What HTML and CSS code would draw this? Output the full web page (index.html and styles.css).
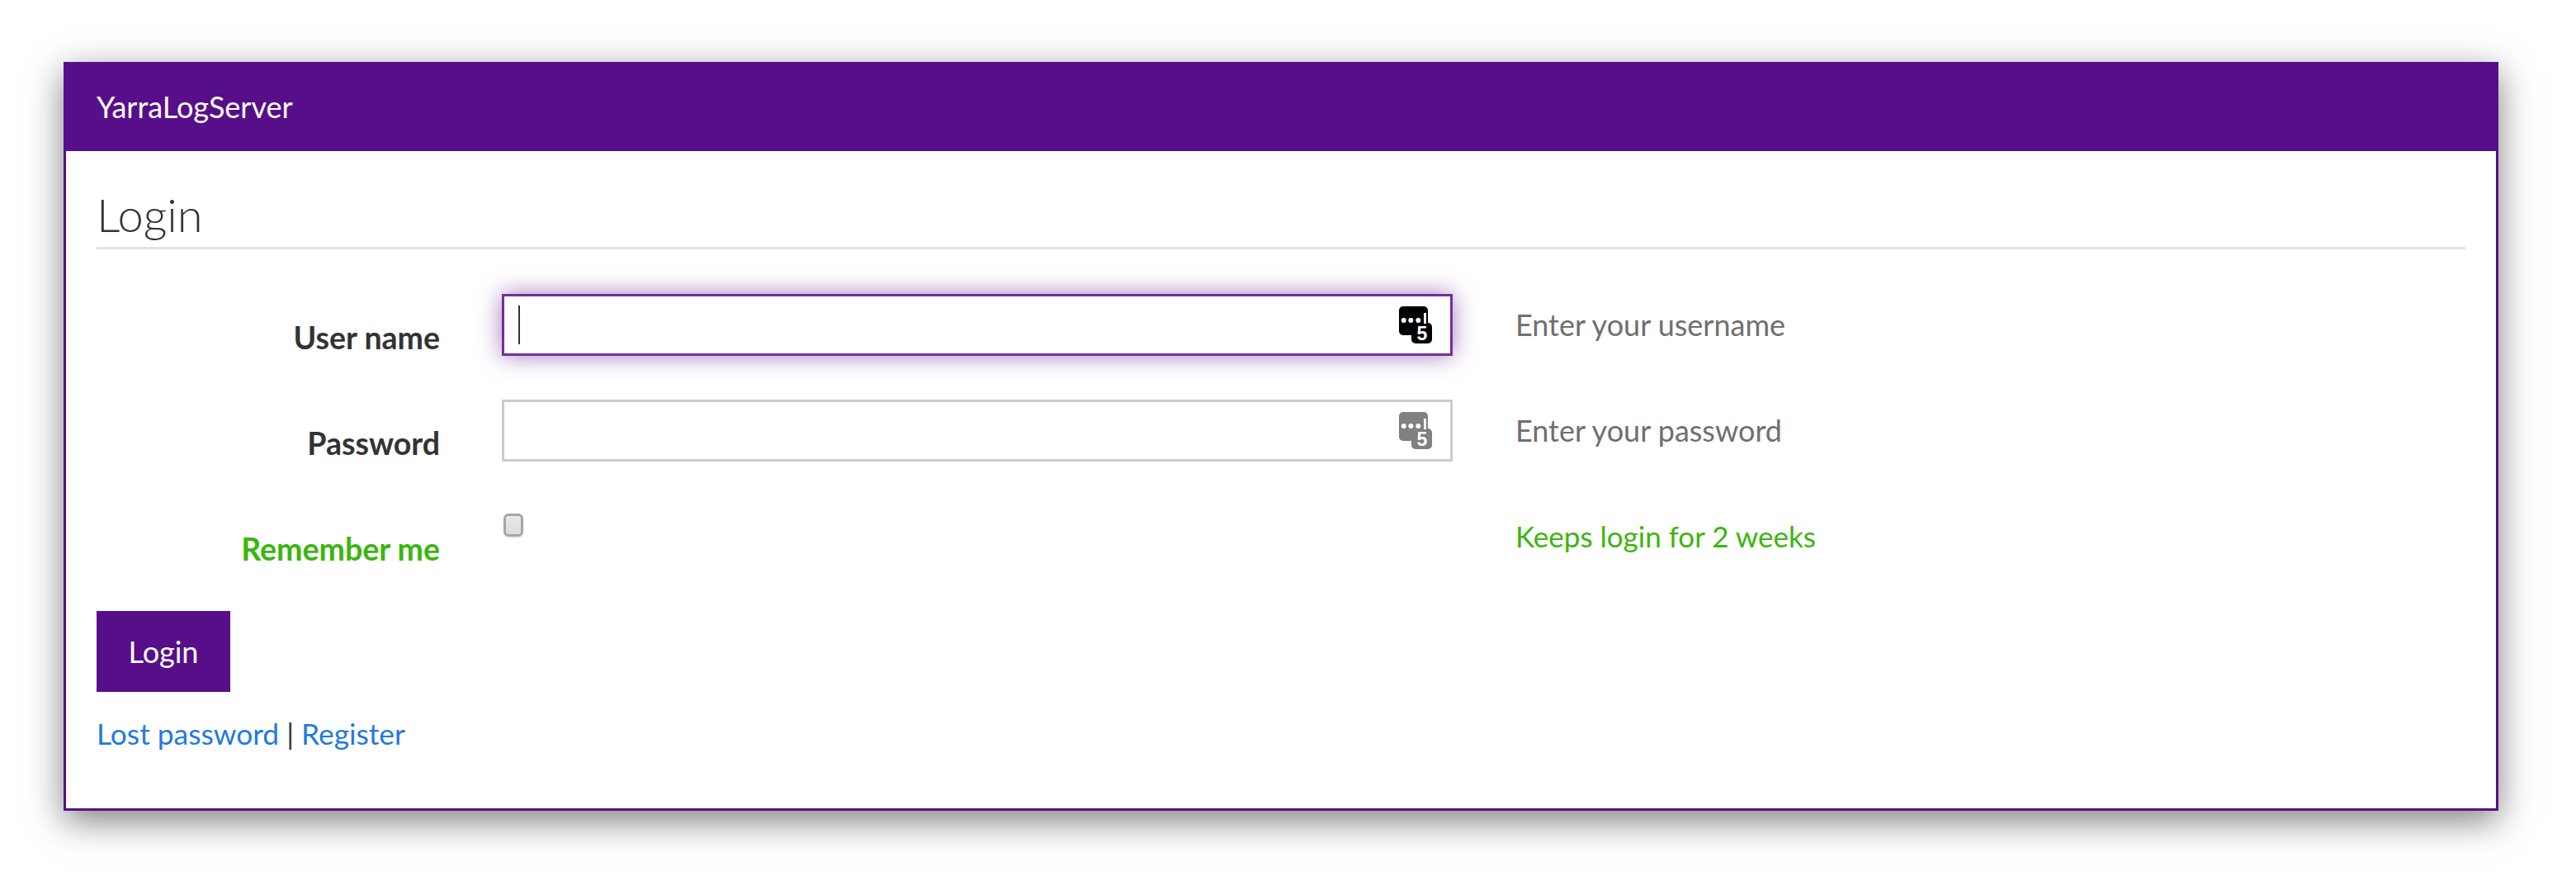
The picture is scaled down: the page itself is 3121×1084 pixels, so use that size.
FILE: index.html
```html
<!DOCTYPE html>
<html lang="en">
<head>
<meta charset="utf-8">
<title>YarraLogServer</title>
<link rel="stylesheet" href="styles.css">
</head>
<body>
<main class="card">
  <header class="card-head">YarraLogServer</header>
  <div class="card-body">
    <h1 class="title">Login</h1>
    <form class="form">
      <div class="row">
        <label class="label" for="user">User name</label>
        <div class="field">
          <input class="input input-focus" id="user" type="text">
          <span class="caret"></span>
          <svg class="key" viewBox="0 0 40 45">
            <rect width="35" height="35" rx="5" fill="currentColor"/>
            <rect x="15" y="20" width="25" height="25" rx="5" fill="currentColor"/>
            <circle cx="5.7" cy="17" r="3" fill="#fff"/>
            <circle cx="14.3" cy="17" r="3" fill="#fff"/>
            <circle cx="23.3" cy="17" r="3" fill="#fff"/>
            <rect x="30" y="8" width="3" height="13" fill="#fff"/>
            <text x="28" y="41" class="five">5</text>
          </svg>
        </div>
        <p class="hint">Enter your username</p>
      </div>
      <div class="row">
        <label class="label" for="pass">Password</label>
        <div class="field">
          <input class="input" id="pass" type="password">
          <svg class="key key-off" viewBox="0 0 40 45">
            <rect width="35" height="35" rx="5" fill="currentColor"/>
            <rect x="15" y="20" width="25" height="25" rx="5" fill="currentColor"/>
            <circle cx="5.7" cy="17" r="3" fill="#fff"/>
            <circle cx="14.3" cy="17" r="3" fill="#fff"/>
            <circle cx="23.3" cy="17" r="3" fill="#fff"/>
            <rect x="30" y="8" width="3" height="13" fill="#fff"/>
            <text x="28" y="41" class="five">5</text>
          </svg>
        </div>
        <p class="hint">Enter your password</p>
      </div>
      <div class="row row-green">
        <label class="label" for="rem">Remember me</label>
        <div class="field"><input class="check" id="rem" type="checkbox"></div>
        <p class="hint">Keeps login for 2 weeks</p>
      </div>
      <button class="btn" type="button">Login</button>
      <p class="links"><a href="#">Lost password</a> | <a href="#">Register</a></p>
    </form>
  </div>
</main>
</body>
</html>
```
FILE: styles.css
```css
* { box-sizing: border-box; }
html, body { margin: 0; background: #fff; }
body {
  padding: 75px 94px 100px 77px;
  font-family: Lato, "Liberation Sans", sans-serif;
  font-size: 36px;
  color: #333;
}
.card {
  height: 907px;
  border: 3px solid #570f89;
  background: #fff;
  box-shadow: 0 12px 40px rgba(0, 0, 0, .5);
}
.card-head {
  height: 105px;
  padding: 0 37px 4px;
  display: flex;
  align-items: center;
  background: #570f89;
  color: #fff;
  font-size: 36px;
}
.card-body { padding: 40px 37px 0; }
.title {
  margin: 0;
  height: 79px;
  font-size: 56px;
  font-weight: 300;
  line-height: 73px;
  border-bottom: 3px solid #e3e3e3;
}
.form { margin-top: 54px; }
.row {
  display: grid;
  grid-template-columns: 416px 1152px auto;
  column-gap: 75px;
  height: 128px;
}
.label {
  text-align: right;
  font-size: 37.5px;
  font-weight: 700;
  padding-top: 30px;
  line-height: 46px;
}
.field { position: relative; }
.input {
  display: block;
  width: 100%;
  height: 75px;
  border: 3px solid #ccc;
  border-radius: 0;
  background: #fff;
  outline: 0;
  padding: 0 16px;
}
.input-focus {
  border-color: #733099;
  box-shadow: 0 0 28px rgba(87, 15, 137, .55);
}
.caret {
  position: absolute;
  left: 20px;
  top: 14px;
  width: 2px;
  height: 47px;
  background: #333;
}
.key {
  position: absolute;
  left: 1087px;
  top: 15px;
  width: 40px;
  height: 45px;
  color: #000;
}
.key-off { color: #808080; }
.five {
  font-family: "Liberation Sans", sans-serif;
  font-size: 23px;
  font-weight: 700;
  fill: #fff;
  text-anchor: middle;
}
.hint {
  margin: 0 0 0 1px;
  color: #6f6f6f;
  line-height: 46px;
  padding-top: 14px;
}
.row-green .label { color: #3cb50f; }
.row-green .hint { color: #3cb50f; font-size: 35px; }
.check {
  appearance: none;
  display: block;
  margin: 10px 0 0 2px;
  width: 24px;
  height: 28px;
  border: 3px solid #a6a6a6;
  border-radius: 6px;
  background: linear-gradient(#e8e8e8, #dcdcdc);
  box-shadow: 0 2px 1px rgba(0, 0, 0, .08);
}
.btn {
  display: block;
  width: 162px;
  height: 98px;
  border: 0;
  border-radius: 0;
  background: #570f89;
  color: #fff;
  font: inherit;
}
.links {
  margin: 28px 0 0;
  font-size: 35.3px;
  line-height: 46px;
}
.links a { color: #1f7ae0; text-decoration: none; }
```
